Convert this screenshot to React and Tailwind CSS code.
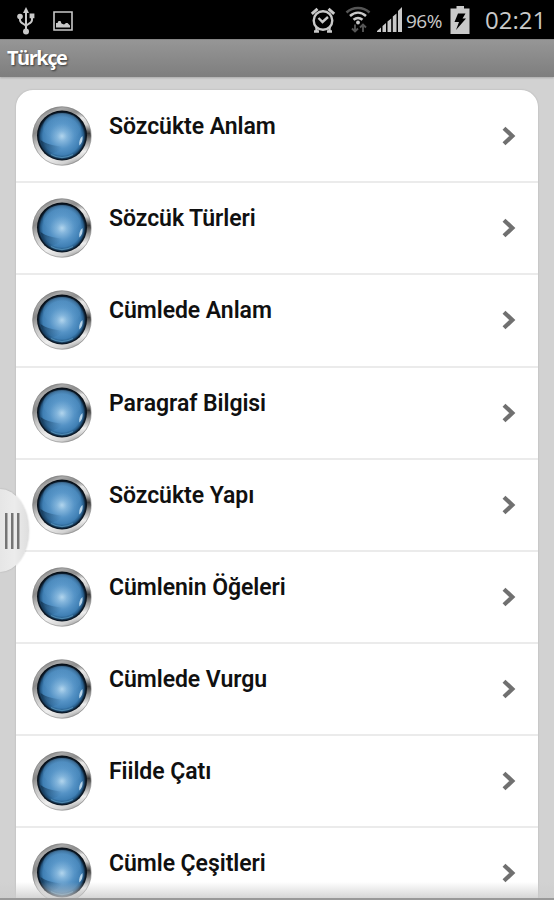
const topics = [
  "Sözcükte Anlam",
  "Sözcük Türleri",
  "Cümlede Anlam",
  "Paragraf Bilgisi",
  "Sözcükte Yapı",
  "Cümlenin Öğeleri",
  "Cümlede Vurgu",
  "Fiilde Çatı",
  "Cümle Çeşitleri",
];

export default function App() {
  return (
    <div className="relative flex h-[900px] w-[554px] flex-col overflow-hidden bg-[#d2d2d2]">
      <OrbGradients />
      <StatusBar />
      <header className="flex h-[38px] shrink-0 items-center border-t border-[#858585] bg-gradient-to-b from-[#969696] to-[#7e7e7e] pb-px pl-[7px] shadow-[0_1px_2px_rgba(0,0,0,0.2)]">
        <h1 className="font-['Open_Sans',sans-serif] text-[20px] leading-none font-bold tracking-[-1.5px] text-white [text-shadow:1px_1px_2px_rgba(0,0,0,0.6)]">
          Türkçe
        </h1>
      </header>

      <main className="min-h-0 flex-1 overflow-hidden px-4 pt-[13px]">
        <ul className="w-[522px] overflow-hidden rounded-t-[17px] bg-white pt-px shadow-[0_0_2px_rgba(0,0,0,0.18)]">
          {topics.map((topic) => (
            <TopicRow key={topic} title={topic} />
          ))}
        </ul>
      </main>

      <div className="absolute bottom-0 left-0 h-[18px] w-full border-b-2 border-[#999] bg-gradient-to-b from-[#cccccc]/0 to-[#cccccc]/80" />
      <DrawerHandle />
    </div>
  );
}

function TopicRow({ title }) {
  return (
    <li className="flex h-[92.18px] items-start border-b-2 border-[#ebebeb] pt-[15px] pr-[22px] pl-4">
      <Orb />
      <span className="mt-[7px] ml-[17px] flex-1 font-[Roboto,sans-serif] text-[23px] leading-[28px] font-semibold tracking-[-0.05px] text-[#101010]">
        {title}
      </span>
      <svg width="14" height="20" viewBox="0 0 14 20" fill="none" className="mt-5">
        <path d="M2 2.2 10.3 10 2 17.8" stroke="#707070" strokeWidth="4.2" />
      </svg>
    </li>
  );
}

function OrbGradients() {
  return (
    <svg className="absolute size-0" aria-hidden="true">
      <defs>
        <linearGradient id="rim" x1="0.25" y1="0" x2="0.75" y2="1">
          <stop offset="0" stopColor="#6e6e6e" />
          <stop offset="0.12" stopColor="#a9a9a9" />
          <stop offset="0.28" stopColor="#8a8a8a" />
          <stop offset="0.45" stopColor="#c4c4c4" />
          <stop offset="0.7" stopColor="#eeeeee" />
          <stop offset="0.88" stopColor="#d2d2d2" />
          <stop offset="1" stopColor="#8c8c8c" />
        </linearGradient>
        <linearGradient id="rimRight" x1="0" y1="0" x2="0" y2="1">
          <stop offset="0" stopColor="#8c8c8c" stopOpacity="0" />
          <stop offset="0.14" stopColor="#e8e8e8" />
          <stop offset="0.28" stopColor="#d0d0d0" />
          <stop offset="0.45" stopColor="#3c3c3c" />
          <stop offset="0.62" stopColor="#9b9b9b" />
          <stop offset="0.8" stopColor="#eeeeee" />
          <stop offset="1" stopColor="#d8d8d8" stopOpacity="0" />
        </linearGradient>
        <radialGradient id="ball" cx="0.5" cy="0.51" r="0.5">
          <stop offset="0" stopColor="#b9daf0" />
          <stop offset="0.2" stopColor="#86b7dd" />
          <stop offset="0.5" stopColor="#5593c6" />
          <stop offset="0.76" stopColor="#3f7fb4" />
          <stop offset="0.86" stopColor="#265b88" />
          <stop offset="0.94" stopColor="#0b1c2d" />
          <stop offset="1" stopColor="#050b12" />
        </radialGradient>
        <linearGradient id="sheen" x1="0" y1="0" x2="0" y2="1">
          <stop offset="0" stopColor="#6fa8d6" stopOpacity="0.45" />
          <stop offset="1" stopColor="#5c9dcd" stopOpacity="0" />
        </linearGradient>
        <linearGradient id="shade" x1="0" y1="0.2" x2="1" y2="0.5">
          <stop offset="0" stopColor="#0a2238" stopOpacity="0.6" />
          <stop offset="1" stopColor="#15456f" stopOpacity="0" />
        </linearGradient>
      </defs>
    </svg>
  );
}

function Orb() {
  return (
    <svg width="60" height="60" viewBox="0 0 60 60" fill="none" className="shrink-0">
      <circle cx="30" cy="30" r="29.6" fill="url(#rim)" />
      <path d="M38 4.5A26.8 26.8 0 0 1 38 55.5" stroke="url(#rimRight)" strokeWidth="5" />
      <circle cx="30" cy="30" r="29.2" stroke="#7c7c7c" strokeOpacity="0.5" />
      <circle cx="30" cy="29.5" r="25" fill="url(#ball)" />
      <ellipse cx="30" cy="21" rx="19" ry="14" fill="url(#sheen)" />
      <path d="M8.5 34c6 4 13 6 22 6.500-3 6-10 8-15 6-4-3-6-7-7-12.500Z" fill="url(#shade)" />
      <path d="M50.500 30c.6 4.500-.8 7.500-3.200 9.500-.6-3.500.6-7.500 3.200-9.500Z" fill="#cfe6f6" fillOpacity="0.85" />
      <path d="M19 48.500c7 4 15 4 22 0" stroke="#69a6c9" strokeOpacity="0.6" strokeWidth="1.2" />
    </svg>
  );
}

function DrawerHandle() {
  return (
    <div className="absolute top-[489px] left-0 flex h-[83px] w-[29px] items-center gap-[3px] rounded-[0_100%_100%_0/0_50%_50%_0] bg-gradient-to-r from-[#e6e6e6] via-[#ececec] to-[#dedede] pl-[5px] shadow-[0_0_2px_rgba(0,0,0,0.2)]">
      <span className="h-9 w-[3px] border-r border-[#b0b0b0] bg-[#757575]" />
      <span className="h-9 w-[3px] border-r border-[#b0b0b0] bg-[#757575]" />
      <span className="h-9 w-[3px] border-r border-[#b0b0b0] bg-[#757575]" />
    </div>
  );
}

function StatusBar() {
  return (
    <div className="flex h-[39px] shrink-0 items-center justify-between bg-black pr-[8px] pl-[17px] font-['Open_Sans',sans-serif] text-[#c9c9c9]">
      <div className="flex items-center gap-[18px] pt-[2px]">
        <UsbIcon />
        <PictureIcon />
      </div>
      <div className="flex items-center">
        <AlarmIcon />
        <WifiIcon />
        <SignalIcon />
        <span className="mt-[3px] ml-[4px] w-[40px] text-[19px] leading-none font-medium tracking-[-0.5px]">96%</span>
        <BatteryIcon />
        <span className="ml-[15px] w-[61px] text-[24px] leading-none whitespace-nowrap">02:21</span>
      </div>
    </div>
  );
}

function UsbIcon() {
  return (
    <svg width="18" height="28" viewBox="0 0 18 28" fill="none" stroke="currentColor" strokeWidth="2">
      <path d="M9 5v18M3 9v4c0 4 6 3.500 6 6.500M15 9v4c0 4-6 3.500-6 6.500" />
      <g fill="currentColor" stroke="none">
        <path d="m9 0 3 6H6Z" />
        <circle cx="3" cy="9.5" r="2.8" />
        <path d="M12.6 6.5h4.800v4.800h-4.800z" />
        <circle cx="9" cy="24.5" r="3" />
      </g>
    </svg>
  );
}

function PictureIcon() {
  return (
    <svg width="20" height="20" viewBox="0 0 20 20" fill="none">
      <path d="M1 1h18v18H1z" stroke="currentColor" strokeWidth="1.6" />
      <path d="M3 16.500v-4.500h1.500l1-2h2l1 2.500L11 13.500l2-1.500h1.500l2.500 2.500v2Z" fill="currentColor" />
    </svg>
  );
}

function AlarmIcon() {
  return (
    <svg width="26" height="26" viewBox="0 0 26 26" fill="none" stroke="currentColor" strokeWidth="2.4">
      <circle cx="13" cy="13.5" r="9.3" />
      <path d="M8.500 11l4 4 5.500-5" />
      <path d="M1.800 6.800 7.500 1.800M24.200 6.800 18.500 1.800" strokeWidth="3" />
      <path d="M6.500 20v4.500M19.500 20v4.500M4 24.500h5M17 24.500h5" />
    </svg>
  );
}

function WifiIcon() {
  return (
    <svg width="26" height="28" viewBox="0 0 26 28" fill="none" strokeWidth="2.5" className="ml-[9px]">
      <path d="M1.500 6.500C8 .5 18 .5 24.500 6.500" stroke="#555" />
      <path d="M5 10c5-4.500 11-4.500 16 0M8.500 13.800c3-2.500 6-2.500 9 0" stroke="currentColor" />
      <circle cx="13" cy="16.5" r="1.9" fill="currentColor" />
      <path d="M10 18.500V25M7 22.500l3 3 3-3M18 26v-7M15 21.500l3-3 3 3" stroke="#555" strokeWidth="1.9" />
    </svg>
  );
}

function SignalIcon() {
  return (
    <svg width="25" height="25" viewBox="0 0 25 25" fill="currentColor" className="ml-[6px]">
      <path d="M0 25v-1l4-3.500V25ZM5.500 25v-6l3.500-3v9ZM10.500 25V14.500l3.700-3V25ZM15.800 25V9.500l3.700-3V25ZM21 25V4l4-4v25Z" />
    </svg>
  );
}

function BatteryIcon() {
  return (
    <svg width="20" height="28" viewBox="0 0 20 28" className="ml-[4px]">
      <path d="M6.500 0h7.500v2.500h5.500V28H.5V2.500h6Z" fill="currentColor" />
      <path d="M8 7.500h7.500L12.500 12.500h3.500L6 24l3-8H4.500Z" fill="#000" />
    </svg>
  );
}
